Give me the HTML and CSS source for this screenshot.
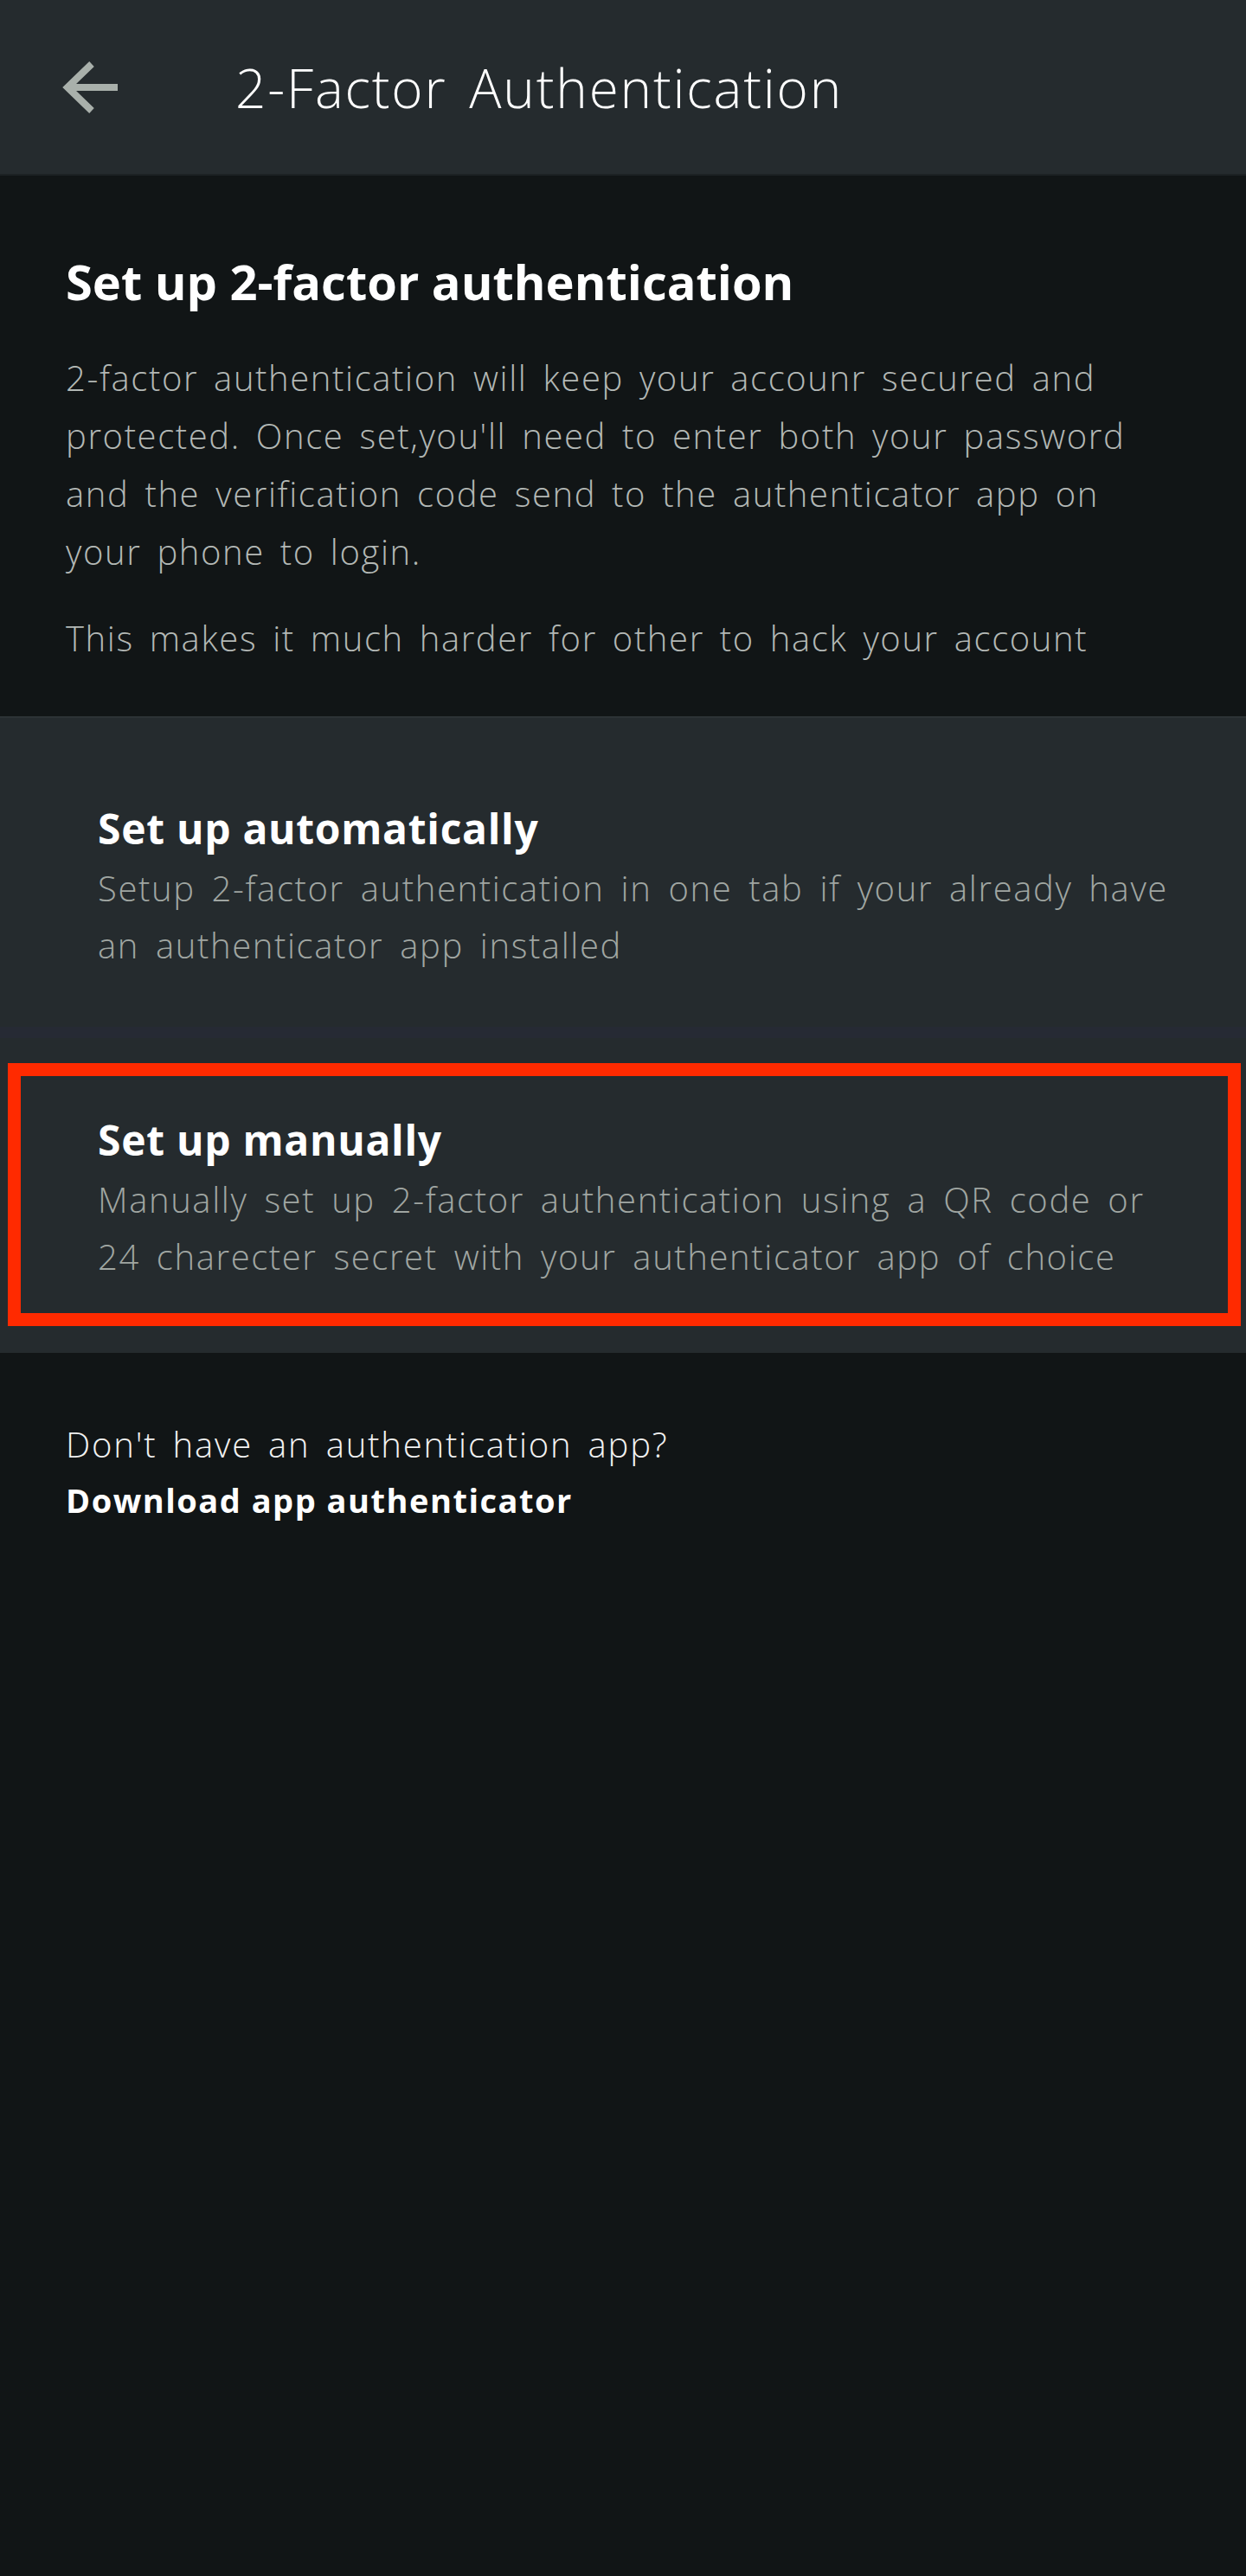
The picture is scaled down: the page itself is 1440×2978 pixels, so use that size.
FILE: index.html
```html
<!DOCTYPE html>
<html lang="en">
<head>
<meta charset="utf-8">
<title>2-Factor Authentication</title>
<link rel="stylesheet" href="styles.css">
</head>
<body>
<header class="topbar">
  <svg class="back" viewBox="0 0 66 60" width="66" height="60" aria-hidden="true">
    <path d="M36 3 L8 30 L36 57" fill="none" stroke="#a9b0ab" stroke-width="8" stroke-linejoin="miter"/>
    <path d="M8 30 H66" fill="none" stroke="#a9b0ab" stroke-width="8"/>
  </svg>
  <h1 class="topbar-title">2-Factor Authentication</h1>
</header>

<section class="intro">
  <h2 class="intro-title">Set up 2-factor authentication</h2>
  <p class="intro-text">2-factor authentication will keep your accounr secured and<br>protected. Once set,you'll need to enter both your password<br>and the verification code send to the authenticator app on<br>your phone to login.</p>
  <p class="intro-text intro-text-2">This makes it much harder for other to hack your account</p>
</section>

<section class="options">
  <div class="option option-auto">
    <h3 class="option-title">Set up automatically</h3>
    <p class="option-text">Setup 2-factor authentication in one tab if your already have<br>an authenticator app installed</p>
  </div>
  <div class="divider"></div>
  <div class="option option-manual">
    <h3 class="option-title">Set up manually</h3>
    <p class="option-text">Manually set up 2-factor authentication using a QR code or<br>24 charecter secret with your authenticator app of choice</p>
    <div class="highlight"></div>
  </div>
</section>

<section class="footer-note">
  <p class="note-q">Don't have an authentication app?</p>
  <p class="note-link">Download app authenticator</p>
</section>
</body>
</html>
```

FILE: styles.css
```css
html, body {
  margin: 0;
  padding: 0;
}
body {
  background: #111516;
  min-height: 2978px;
  font-family: "Open Sans", "Noto Sans", "Liberation Sans", sans-serif;
  color: #ffffff;
}
h1, h2, h3, p {
  margin: 0;
  font-weight: normal;
}

.topbar {
  height: 201px;
  background: #252b2e;
  border-bottom: 2px solid #1d2224;
  display: flex;
  align-items: center;
  padding-left: 70px;
}
.back {
  display: block;
  flex: none;
}
.topbar-title {
  margin-left: 136px;
  font-size: 62px;
  font-weight: 300;
  line-height: 80px;
  color: #ffffff;
  letter-spacing: 1.8px;
  word-spacing: 8px;
}

.intro {
  padding: 87px 0 57px 76px;
}
.intro-title {
  font-size: 56px;
  font-weight: 700;
  line-height: 70px;
  color: #ffffff;
}
.intro-text {
  margin-top: 43px;
  font-size: 40px;
  font-weight: 300;
  line-height: 67px;
  color: #b3b8b5;
  white-space: nowrap;
  letter-spacing: 1.6px;
  word-spacing: 6px;
}
.intro-text-2 {
  margin-top: 33px;
}

.options {
  background: #252b2e;
  border-top: 2px solid #2d3335;
}
.option {
  position: relative;
  padding-left: 113px;
}
.option-auto {
  padding-top: 98px;
  padding-bottom: 61px;
}
.option-manual {
  padding-top: 88px;
  padding-bottom: 78px;
}
.divider {
  height: 13px;
  background: #262a34;
}
.option-title {
  font-size: 48px;
  font-weight: 700;
  line-height: 60px;
  color: #ffffff;
  letter-spacing: 0.7px;
}
.option-text {
  margin-top: 6px;
  font-size: 40px;
  font-weight: 300;
  line-height: 66px;
  color: #a0a6a2;
  white-space: nowrap;
  letter-spacing: 1.6px;
  word-spacing: 7px;
}
.highlight {
  position: absolute;
  left: 9px;
  top: 29px;
  width: 1395px;
  height: 274px;
  border: 15px solid #ff2a00;
  pointer-events: none;
}

.footer-note {
  padding: 74px 0 0 76px;
}
.note-q {
  font-size: 40px;
  font-weight: 300;
  line-height: 64px;
  color: #f2f2f2;
  letter-spacing: 1.8px;
  word-spacing: 6px;
}
.note-link {
  font-size: 38px;
  font-weight: 700;
  line-height: 64px;
  color: #ffffff;
  letter-spacing: 1.5px;
}
```
